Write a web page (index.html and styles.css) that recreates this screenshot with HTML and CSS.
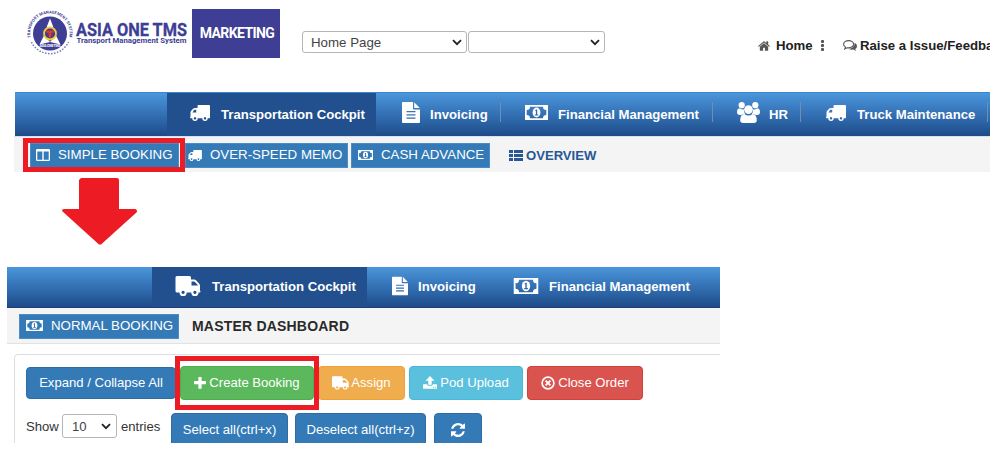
FILE: index.html
```html
<!DOCTYPE html>
<html lang="en">
<head>
<meta charset="utf-8">
<title>Asia One TMS</title>
<link rel="stylesheet" href="styles.css">
</head>
<body>
<svg width="0" height="0" class="defs">
<symbol id="truck" viewBox="0 0 20 16"><path fill-rule="evenodd" d="M8.500 0H19q1 0 1 1v11.500q0 .8-.8.8h-1.500a2.700 2.700 0 0 1-5.400 0H7.700a2.700 2.700 0 0 1-5.400 0H.8q-.8 0-.8-.8t.5-.8V7.500q0-1 .7-1.700l2.200-2.200q.6-.6 1.500-.6h2.600V1q0-1 1-1zM2.400 7.400h3.800V4.700H4.700q-.4 0-.6.200zM5 12.100a1.200 1.200 0 1 0 .01 0zM15 12.100a1.200 1.200 0 1 0 .01 0z"/></symbol>
<symbol id="truck-r" viewBox="0 0 25 20"><path fill-rule="evenodd" d="M1.500 0H14q1.500 0 1.500 1.500V3.500h3.200q1 0 1.800.8l3.200 3.400q.8.8.8 1.900v5.200q.5 0 .5.800t-.6.800h-1.400a3.600 3.600 0 0 1-7.200 0h-4.600a3.600 3.600 0 0 1-7.200 0H1.500Q0 16.400 0 14.900V1.500Q0 0 1.500 0zM16 5.500v4h6.500v-.3l-3.300-3.500q-.3-.2-.8-.2zM7.600 14.800a1.600 1.600 0 1 0 .01 0zM19.400 14.800a1.600 1.600 0 1 0 .01 0z"/></symbol>
<symbol id="file" viewBox="0 0 18 21"><path fill-rule="evenodd" d="M1 0h10v6.500q0 .9.900.9H18V20q0 1-1 1H1q-1 0-1-1V1q0-1 1-1zM12.200.2l5.600 5.900h-5.600zM4.500 9v1.300h9V9zm0 3.200v1.300h9v-1.300zm0 3.200v1.300h9v-1.300z"/></symbol>
<symbol id="money" viewBox="0 0 23 15"><path fill-rule="evenodd" d="M0 0h23v15H0zM5 1.700A3.300 3.300 0 0 1 1.700 5v5A3.300 3.300 0 0 1 5 13.300h13a3.300 3.300 0 0 1 3.300-3.300V5A3.300 3.300 0 0 1 18 1.700z"/><ellipse cx="11.500" cy="7.500" rx="3.900" ry="4.900"/><path class="note" d="M10 5.400l1.200-1h1v5h1.100v1.100H9.800V9.400h1.100V5.700l-.6.400z"/></symbol>
<symbol id="users" viewBox="0 0 23 21"><circle cx="4.700" cy="3.200" r="3.100"/><circle cx="18.300" cy="3.200" r="3.100"/><path d="M2.200 6.200q4 2 5 .7-.6 3.600 1 5.100Q5.300 12 4.300 13H2.500Q0 13 0 10.600 0 6.600 2.200 6.200zM20.800 6.200q-4 2-5 .7.600 3.600-1 5.100 2.900 0 3.900 1h1.800q2.500 0 2.500-2.400 0-4-2.200-4.400z"/><circle cx="11.500" cy="7.600" r="4.300"/><path d="M7.400 12q4.100 3.200 8.200 0 4.200.3 4.200 6.300 0 2.700-3 2.700H6.200q-3 0-3-2.700 0-6 4.200-6.300z"/></symbol>
<symbol id="columns" viewBox="0 0 14 12"><path fill-rule="evenodd" d="M1.200 0h11.600Q14 0 14 1.200v9.600q0 1.200-1.200 1.200H1.200Q0 12 0 10.800V1.200Q0 0 1.200 0zM1.300 2.500v8.200h5V2.500zm6.400 0v8.200h5V2.500z"/></symbol>
<symbol id="list" viewBox="0 0 14 11"><path d="M0 0h4v3H0zM5 0h9v3H5zM0 4h4v3H0zM5 4h9v3H5zM0 8h4v3H0zM5 8h9v3H5z"/></symbol>
<symbol id="home" viewBox="70 250 1650 1290"><path d="M1472 992v480q0 26-19 45t-45 19h-384v-384h-256v384h-384q-26 0-45-19t-19-45v-480q0-1 .5-3t.5-3l575-474 575 474q1 2 1 6zm223-69l-62 74q-8 9-21 11h-3q-13 0-21-7l-692-577-692 577q-12 8-24 7-13-2-21-11l-62-74q-8-10-7-23.500t11-21.500l719-599q32-26 76-26t76 26l244 204v-195q0-14 9-23t23-9h192q14 0 23 9t9 23v408l219 182q10 8 11 21.500t-7 23.500z"/></symbol>
<symbol id="comments" viewBox="0 0 14 12"><path d="M5.500.6C2.800.6.6 2.200.6 4.200c0 1.200.8 2.200 1.900 2.900L1.800 8.900l2.300-1.200c3.700.6 6.500-1.100 6.500-3.500C10.600 2.200 8.300.6 5.500.6z" fill="none" stroke="currentColor" stroke-width="1.100"/><path d="M11.500 2.800c3.200 1.500 3.200 4.800.6 6.300l1.200 2-2.900-1.500c-1.900.3-3.600 0-4.800-.8 3.500-.2 6.300-2.300 5.900-6z"/></symbol>
<symbol id="plus" viewBox="192 192 1408 1344"><path d="M1600 736v192q0 40-28 68t-68 28h-416v416q0 40-28 68t-68 28h-192q-40 0-68-28t-28-68v-416h-416q-40 0-68-28t-28-68v-192q0-40 28-68t68-28h416v-416q0-40 28-68t68-28h192q40 0 68 28t28 68v416h416q40 0 68 28t28 68z"/></symbol>
<symbol id="upload" viewBox="0 0 14 13"><path fill-rule="evenodd" d="M7 0l4.500 4.700H8.700v4H5.300v-4H2.500zM.6 8.300h3.500q.3 1.500 1.700 1.500h2.400q1.400 0 1.700-1.500h3.500q.6 0 .6.600v3.300q0 .6-.6.600H.6q-.6 0-.6-.6V8.900q0-.6.600-.6zM10 10.800v1h1v-1zm1.900 0v1h1v-1z"/></symbol>
<symbol id="close" viewBox="0 0 14 14"><g fill="none" stroke="currentColor"><circle cx="7" cy="7" r="5.900" stroke-width="1.700"/><path d="M4.600 4.600l4.800 4.800M9.400 4.600L4.600 9.400" stroke-width="2"/></g></symbol>
<symbol id="refresh" viewBox="128 128 1536 1536"><path d="M1639 1056q0 5-1 7-64 268-268 434.500t-478 166.500q-146 0-282.500-55t-243.500-157l-129 129q-19 19-45 19t-45-19-19-45v-448q0-26 19-45t45-19h448q26 0 45 19t19 45-19 45l-137 137q71 66 161 102t187 36q134 0 250-65t186-179q11-17 53-117 8-23 30-23h192q13 0 22.500 9.500t9.500 22.500zm25-800v448q0 26-19 45t-45 19h-448q-26 0-45-19t-19-45 19-45l138-138q-148-137-349-137-134 0-250 65t-186 179q-11 17-53 117-8 23-30 23h-199q-13 0-22.500-9.500t-9.500-22.500v-7q65-268 270-434.500t480-166.500q146 0 284 55.500t245 156.500l130-129q19-19 45-19t45 19 19 45z"/></symbol>
<symbol id="chev" viewBox="0 0 10 7"><path d="M1 1.200l4 4 4-4" fill="none" stroke="currentColor" stroke-width="1.800"/></symbol>
</svg>

<header class="top">
  <svg class="logo" width="162" height="50" viewBox="0 0 162 50">
    <defs><path id="arc" d="M3.800 29.500A19.700 19.700 0 1 1 42.200 29.500"/></defs>
    <circle cx="23" cy="25.500" r="17" class="seal"/>
    <path d="M4.500 34A20.500 20.500 0 0 0 41.500 34" class="dots"/>
    <text class="ringtext"><textPath href="#arc" textLength="70">TRANSPORT MANAGEMENT SYSTEM</textPath></text>
    <path d="M23 10.500l3.500 9h-7zM12.500 36.500l4.500-9 6 6.500zM33.500 36.500l-4.500-9-6 6.500z" fill="#fff"/>
    <circle cx="23" cy="25.500" r="6" fill="#3d3e94" stroke="#f5cc36" stroke-width="1.800"/>
    <path d="M19.200 22.500h7.600v2.200h-2.500v4.800h-2.600v-4.800h-2.500z" fill="#e8352c"/>
    <text x="12.500" y="38.500" class="sealtext" textLength="21">ASIA ONE TMS</text>
    <text x="49" y="28.200" class="brand" textLength="111" lengthAdjust="spacingAndGlyphs">ASIA ONE TMS</text>
    <text x="49.500" y="35.200" class="tagline" textLength="110" lengthAdjust="spacingAndGlyphs">Transport Management System</text>
  </svg>
  <div class="dept">MARKETING</div>
  <div class="select page">Home Page<svg class="chev"><use href="#chev"/></svg></div>
  <div class="select blank"><svg class="chev"><use href="#chev"/></svg></div>
  <nav class="links">
    <svg class="i-home"><use href="#home"/></svg><b class="l-home">Home</b>
    <span class="kebab"><i></i><i></i><i></i></span>
    <svg class="i-com"><use href="#comments"/></svg><b>Raise a Issue/Feedback</b>
  </nav>
</header>

<section class="app first">
  <nav class="bar">
    <a class="tab active t1"><svg class="i-truck"><use href="#truck"/></svg>Transportation Cockpit</a>
    <a class="tab t2"><svg class="i-file"><use href="#file"/></svg>Invoicing</a>
    <a class="tab t3"><svg class="i-money"><use href="#money"/></svg>Financial Management</a>
    <a class="tab t4"><svg class="i-users"><use href="#users"/></svg>HR</a>
    <a class="tab t5"><svg class="i-truck"><use href="#truck"/></svg>Truck Maintenance</a>
  </nav>
  <div class="sub">
    <a class="chip c1"><svg class="i-col"><use href="#columns"/></svg>SIMPLE BOOKING</a>
    <a class="chip c2"><svg class="i-truck-s"><use href="#truck"/></svg>OVER-SPEED MEMO</a>
    <a class="chip c3"><svg class="i-money-s"><use href="#money"/></svg>CASH ADVANCE</a>
    <a class="overview"><svg class="i-list"><use href="#list"/></svg>OVERVIEW</a>
  </div>
</section>

<section class="app second">
  <nav class="bar">
    <a class="tab active s1"><svg class="i-truck-l"><use href="#truck-r"/></svg>Transportation Cockpit</a>
    <a class="tab s2"><svg class="i-file2"><use href="#file"/></svg>Invoicing</a>
    <a class="tab s3"><svg class="i-money-l"><use href="#money"/></svg>Financial Management</a>
  </nav>
  <div class="sub">
    <a class="chip c4"><svg class="i-money-n"><use href="#money"/></svg>NORMAL BOOKING</a>
    <h1>MASTER DASHBOARD</h1>
  </div>
  <div class="panel">
    <div class="row actions">
      <a class="btn expand">Expand / Collapse All</a>
      <a class="btn create"><svg class="i-plus"><use href="#plus"/></svg>Create Booking</a>
      <a class="btn assign"><svg class="i-tr"><use href="#truck-r"/></svg>Assign</a>
      <a class="btn pod"><svg class="i-up"><use href="#upload"/></svg>Pod Upload</a>
      <a class="btn close"><svg class="i-x"><use href="#close"/></svg>Close Order</a>
    </div>
    <div class="row entries">
      <span class="show">Show</span>
      <div class="select count">10<svg class="chev"><use href="#chev"/></svg></div>
      <span class="ent">entries</span>
      <a class="btn sel">Select all(ctrl+x)</a>
      <a class="btn desel">Deselect all(ctrl+z)</a>
      <a class="btn ref"><svg class="i-ref"><use href="#refresh"/></svg></a>
    </div>
  </div>
</section>

<div class="mark mark-simple"></div>
<div class="mark mark-create"></div>
<svg class="arrow" width="76" height="68" viewBox="0 0 76 68"><path d="M19 0h36q2 0 2 2v29h16q2 0 2 3L39 66.500h-2L0 33q0-2 2-2h15V2z"/></svg>
</body>
</html>
```
FILE: styles.css
```css
* { box-sizing: border-box; }
body { margin: 0; width: 991px; height: 460px; overflow: hidden; position: relative; background: #fff; font: 13.100px/16px "Liberation Sans", Arial, sans-serif; color: #333; }
svg { display: block; fill: currentColor; flex: none; }
.defs { position: absolute; }
#money .note { fill: #2f68ad; }

.top { display: flex; height: 92px; width: 990px; overflow: hidden; }
.logo { margin: 8px 0 0 27px; }
.seal { fill: #3d3e94; }
.dots { fill: none; stroke: #7778b6; stroke-width: 1.500; stroke-dasharray: 1.500 1.500; }
.ringtext { font: bold 4px Roboto, sans-serif; fill: #3d3e94; }
.sealtext { font: bold 3.500px Roboto, sans-serif; fill: #fff; }
.brand { font: bold 18px Roboto, sans-serif; fill: #3d3e94; stroke: #3d3e94; stroke-width: .3; }
.tagline { font: bold 8px Roboto, sans-serif; fill: #3d3e94; }
.dept { flex: none; margin: 9px 0 0 3px; padding-left: 2px; width: 88px; height: 49px; background: #3d3e94; color: #fff; font: bold 14px/49px Roboto, sans-serif; text-align: center; letter-spacing: -.6px; white-space: nowrap; }
.select { display: flex; align-items: center; border: 1px solid #b5b5b5; border-radius: 3px; background: #fff; flex: none; color: #444; }
.chev { width: 10px; height: 7px; margin-left: auto; color: #222; }
.page { margin: 31px 0 0 22px; width: 165px; height: 22px; padding: 1px 4px 0 8px; font-size: 13.300px; }
.blank { margin: 31px 0 0 1px; width: 137px; height: 22px; padding: 1px 4px 0 0; }
.links { display: flex; align-items: center; margin: 38px 0 0 153px; height: 16px; white-space: nowrap; color: #222; flex: none; font-size: 13.200px; }
.i-home { width: 12px; height: 10px; margin: 0 6px 1px 0; color: #555; }
.l-home { width: 45px; }
.kebab { display: grid; gap: 1px; width: 3px; margin: 0 19px 2px 0; }
.kebab i { width: 3px; height: 3px; background: #555; border-radius: 1px; }
.i-com { width: 14px; height: 12px; margin-right: 3px; color: #555; }

.bar { display: flex; background: linear-gradient(#4b96db, #3877bb 40%, #2a62a3 70%, #1e4a87); }
.tab { display: flex; align-items: center; color: #fff; font-size: 13.150px; font-weight: bold; white-space: nowrap; flex: none; }
.active { background: #22508e; }
.first { width: 976px; margin-left: 14px; }
.first .bar { height: 44px; margin-left: 1px; padding-left: 152px; border-top: 1px solid #3f86ca; overflow: hidden; }
.first .tab { border-right: 1px solid transparent; border-image: linear-gradient(transparent 23%, #6f8fb0 23%, #6f8fb0 67%, transparent 67%) 1; }
.first .active { border: 0; }
.t1 { width: 209px; padding-left: 23px; }
.t2 { width: 125px; padding-left: 26px; }
.t3 { width: 212px; padding-left: 24px; }
.t4 { width: 88px; padding-left: 24px; }
.t5 { width: 187px; padding-left: 25px; }
.i-truck { width: 20px; height: 16px; margin: 0 11px 4px 0; }
.i-file { width: 18px; height: 21px; margin: 0 10px 4px 0; }
.i-money { width: 23px; height: 15px; margin: 0 10px 4px 0; }
.i-users { width: 23px; height: 21px; margin: 0 9px 4px 0; }
.sub { display: flex; height: 36px; background: #f4f4f4; }
.first .sub { padding: 6px 0 0 16px; border-top: 1px solid #d5e1ee; }
.chip { display: flex; align-items: center; flex: none; height: 25px; padding-bottom: 1px; background: #337ab7; border: 1px solid #4c8cc4; color: #fff; white-space: nowrap; font-size: 13.300px; }
.c1 { width: 149px; padding-left: 5px; }
.c2 { width: 163px; margin-left: 6px; padding-left: 2px; }
.c3 { width: 139px; margin-left: 3px; padding-left: 6px; }
.i-col { width: 14px; height: 12px; margin-right: 8px; }
.i-truck-s { width: 14px; height: 11px; margin: 0 8px 0 0; }
.i-money-s { width: 15px; height: 10px; margin: 0 8px 1px 0; }
.overview { display: flex; align-items: center; height: 25px; margin-left: 19px; color: #285796; font-weight: bold; }
.i-list { width: 14px; height: 11px; margin-right: 3px; }

.second { margin: 95px 0 0 7px; width: 713px; height: 176px; overflow: hidden; }
.second .bar { height: 41px; padding-left: 145px; border-bottom: 1px solid #1e3f79; }
.s1 { width: 215px; padding-left: 23px; }
.s2 { width: 119px; padding-left: 25px; }
.s3 { width: 220px; padding-left: 27px; }
.i-truck-l { width: 26px; height: 20px; margin: 0 11px 2px 0; }
.i-file2 { width: 16px; height: 20px; margin: 0 10px 3px 0; }
.i-money-l { width: 26px; height: 16px; margin: 0 10px 2px 0; }
.second .sub { height: 36px; padding: 6px 0 0 12px; border-bottom: 1px solid #e2e2e2; }
.c4 { width: 160px; padding-left: 6px; }
.i-money-n { width: 17px; height: 11px; margin: 0 8px 1px 0; }
h1 { margin: 0 0 0 13px; font-size: 14px; line-height: 25px; letter-spacing: .2px; color: #2a2a2a; white-space: nowrap; }
.panel { margin: 10px 0 0 7px; width: 730px; height: 120px; border: 1px solid #ddd; border-radius: 4px; }
.row { display: flex; white-space: nowrap; }
.actions { padding: 11px 0 0 11px; height: 45px; }
.btn { display: flex; align-items: center; justify-content: center; flex: none; height: 34px; padding-bottom: 1px; border-radius: 4px; background: #337ab7; border: 1px solid #2e6da4; color: #fff; }
.expand { width: 150px; height: 32px; margin-top: 1px; }
.create { width: 134px; margin-left: 4px; background: #5cb85c; border-color: #4cae4c; }
.assign { width: 87px; margin-left: 4px; background: #f0ad4e; border-color: #eea236; }
.pod { width: 114px; margin-left: 4px; background: #5bc0de; border-color: #46b8da; }
.close { width: 116px; margin-left: 4px; background: #d9534f; border-color: #d43f3a; }
.i-plus { width: 12px; height: 12px; margin-right: 3px; }
.i-tr { width: 17px; height: 14px; margin-right: 2px; }
.i-up { width: 14px; height: 13px; margin-right: 3px; }
.i-x { width: 14px; height: 14px; margin-right: 3px; }
.entries { padding: 13px 0 0 11px; }
.show { width: 36px; padding-top: 6px; }
.count { width: 55px; height: 24px; margin-top: 1px; padding: 1px 5px 0 9px; }
.ent { width: 50px; margin-left: 4px; padding-top: 6px; }
.sel { width: 117px; }
.desel { width: 131px; margin-left: 7px; }
.ref { width: 48px; margin-left: 8px; }
.i-ref { width: 14px; height: 14px; }

.mark { position: absolute; border: 5px solid #ed1c24; }
.mark-simple { left: 23px; top: 138px; width: 162px; height: 34px; }
.mark-create { left: 175px; top: 356px; width: 144px; height: 54px; }
.arrow { position: absolute; left: 62px; top: 178px; fill: #ed1c24; }
```
